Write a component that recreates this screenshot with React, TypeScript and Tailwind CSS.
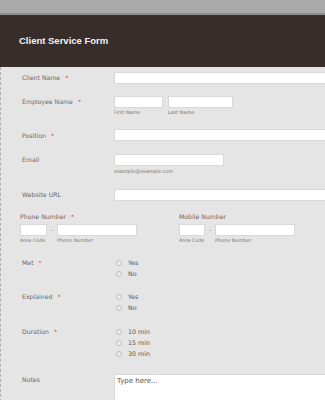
import React from 'react';

const labelCls = "text-[6.2px] leading-[12px] text-[#6a6a6a]";
const subCls = "text-[4.9px] leading-[8px] text-[#777]";
const inputCls = "h-[12px] bg-white border border-[#d8d8d8]";

const Req = () => <span className="ml-[5px] text-[#e23b3b]">*</span>;

const Radio = ({ text }: { text: string }) => (
  <div className="flex items-center h-[11px]">
    <span className="w-[6px] h-[6px] rounded-full border border-[#bdbdbd] bg-[#eeeeee] ml-[2px]" />
    <span className="ml-[6px] text-[6.3px] text-[#555]">{text}</span>
  </div>
);

export default function App() {
  return (
    <div className="w-[325px] h-[400px] overflow-hidden bg-[#a9a9a9]" style={{ fontFamily: '"DejaVu Sans", Verdana, sans-serif' }}>
      {/* top strip */}
      <div className="h-[13px] bg-[#aaaaaa]" />
      <div className="h-[2px] bg-[#8e8e8e]" />
      {/* header */}
      <div className="h-[52px] bg-[#372e2c] flex items-center pl-[19px]">
        <h1 className="text-[9.5px] font-bold text-[#f2f2f2]" style={{ fontFamily: '"Liberation Sans", Arial, sans-serif' }}>
          Client Service Form
        </h1>
      </div>

      {/* form body */}
      <div className="h-[340px] bg-[#e5e5e5] border-l border-dashed border-[#b0b0b0] pl-[21px] pt-[5px]">
        {/* Client Name */}
        <div className="flex mb-[12px]">
          <div className={`w-[92px] ${labelCls}`}>Client Name<Req /></div>
          <div className={`flex-1 ${inputCls} border-r-0`} />
        </div>

        {/* Employee Name */}
        <div className="flex mb-[13px]">
          <div className={`w-[92px] ${labelCls}`}>Employee Name<Req /></div>
          <div className="flex gap-[5px]">
            <div className="flex flex-col">
              <div className={`w-[49px] ${inputCls}`} />
              <span className={subCls}>First Name</span>
            </div>
            <div className="flex flex-col">
              <div className={`w-[65px] ${inputCls}`} />
              <span className={subCls}>Last Name</span>
            </div>
          </div>
        </div>

        {/* Position */}
        <div className="flex mb-[12px]">
          <div className={`w-[92px] ${labelCls} pt-[1px]`}>Position<Req /></div>
          <div className={`flex-1 ${inputCls} border-r-0`} />
        </div>

        {/* Email */}
        <div className="flex mb-[14px]">
          <div className={`w-[92px] ${labelCls}`}>Email</div>
          <div className="flex flex-col">
            <div className={`w-[110px] ${inputCls}`} />
            <span className={`${subCls} mt-[1px]`}>example@example.com</span>
          </div>
        </div>

        {/* Website URL */}
        <div className="flex mb-[10px]">
          <div className={`w-[92px] ${labelCls}`}>Website URL</div>
          <div className={`flex-1 ${inputCls} border-r-0`} />
        </div>

        {/* Phone / Mobile */}
        <div className="flex -ml-[2px] mb-[13px]">
          <div className="w-[159px]">
            <div className={`${labelCls} h-[13px]`}>Phone Number<Req /></div>
            <div className="flex items-start">
              <div className="flex flex-col">
                <div className={`w-[27px] ${inputCls}`} />
                <span className={subCls}>Area Code</span>
              </div>
              <span className="w-[10px] text-center text-[6px] leading-[12px] text-[#777]">-</span>
              <div className="flex flex-col">
                <div className={`w-[80px] ${inputCls}`} />
                <span className={subCls}>Phone Number</span>
              </div>
            </div>
          </div>
          <div>
            <div className={`${labelCls} h-[13px]`}>Mobile Number</div>
            <div className="flex items-start">
              <div className="flex flex-col">
                <div className={`w-[26px] ${inputCls}`} />
                <span className={subCls}>Area Code</span>
              </div>
              <span className="w-[10px] text-center text-[6px] leading-[12px] text-[#777]">-</span>
              <div className="flex flex-col">
                <div className={`w-[80px] ${inputCls}`} />
                <span className={subCls}>Phone Number</span>
              </div>
            </div>
          </div>
        </div>

        {/* Met */}
        <div className="flex mb-[12px]">
          <div className={`w-[92px] ${labelCls}`}>Met<Req /></div>
          <div className="flex flex-col">
            <Radio text="Yes" />
            <Radio text="No" />
          </div>
        </div>

        {/* Explained */}
        <div className="flex mb-[13px]">
          <div className={`w-[92px] ${labelCls}`}>Explained<Req /></div>
          <div className="flex flex-col">
            <Radio text="Yes" />
            <Radio text="No" />
          </div>
        </div>

        {/* Duration */}
        <div className="flex mb-[15px]">
          <div className={`w-[92px] ${labelCls}`}>Duration<Req /></div>
          <div className="flex flex-col">
            <Radio text="10 min" />
            <Radio text="15 min" />
            <Radio text="30 min" />
          </div>
        </div>

        {/* Notes */}
        <div className="flex">
          <div className={`w-[92px] ${labelCls}`}>Notes</div>
          <div className="flex-1 h-[40px] bg-white border border-[#d8d8d8] border-r-0 px-[2px] pt-[1px] text-[7px] text-[#555]">
            Type here...
          </div>
        </div>
      </div>
    </div>
  );
}
